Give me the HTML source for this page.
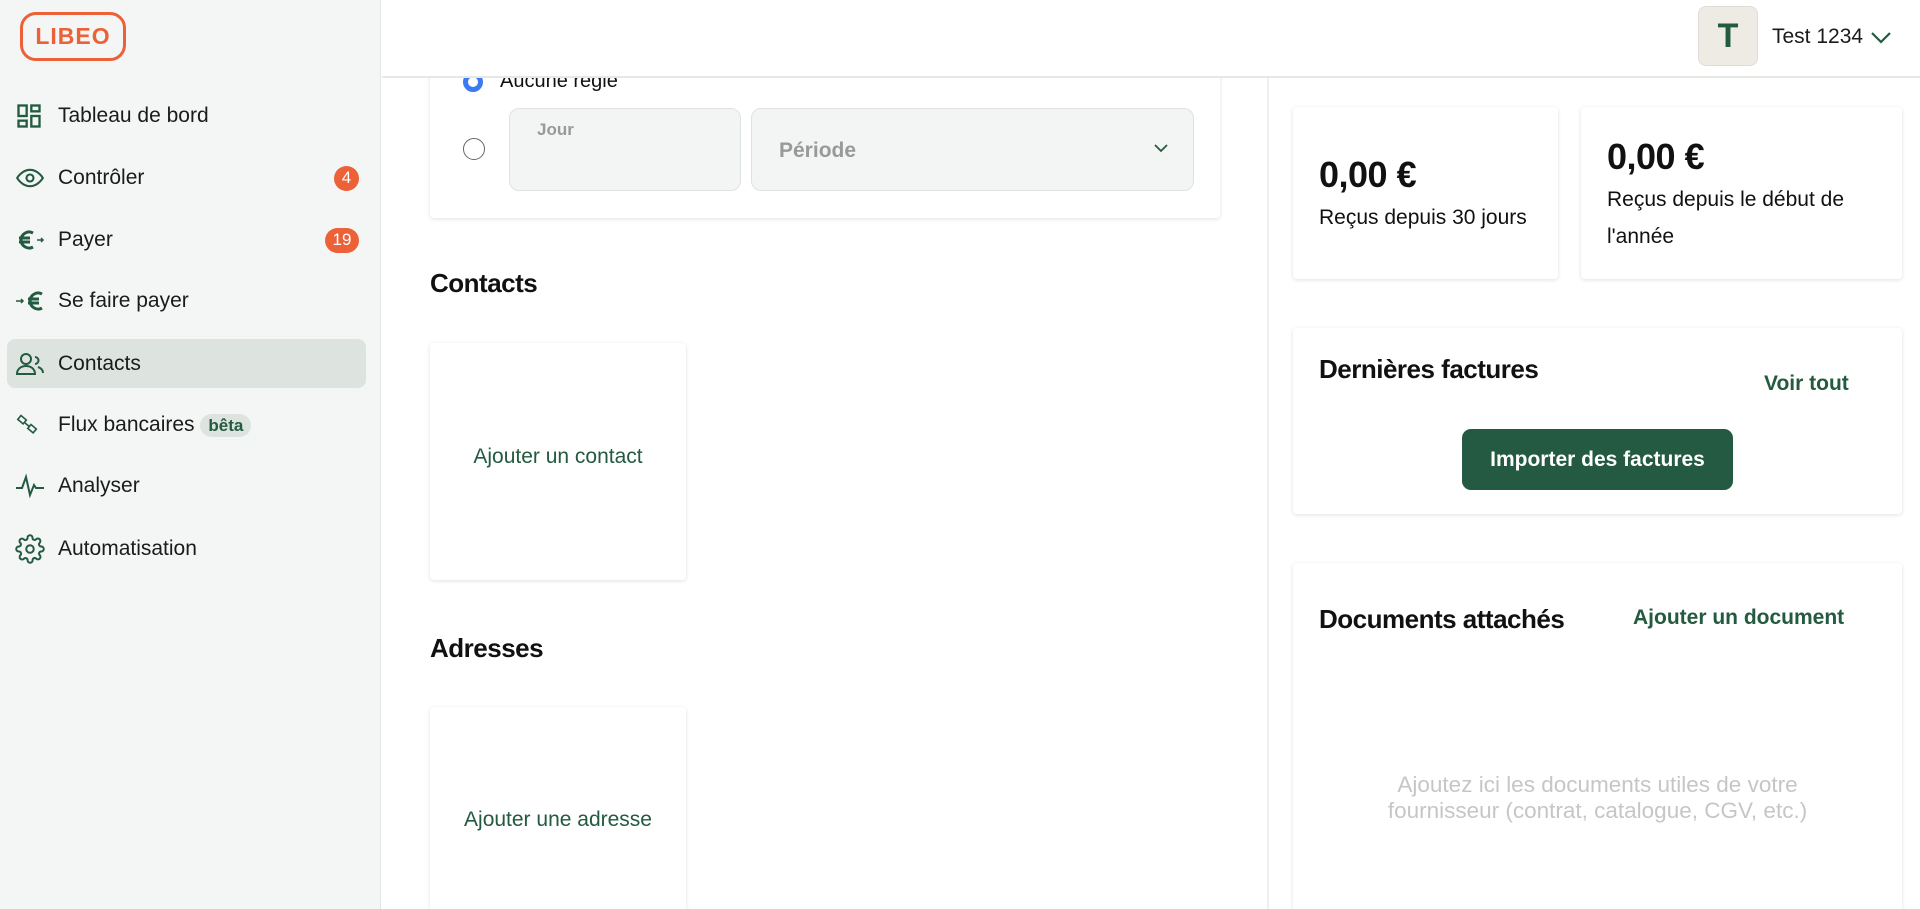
<!DOCTYPE html>
<html style="overflow:hidden;height:909px"><head><meta charset="utf-8"><style>
*{box-sizing:border-box;margin:0;padding:0}
html,body{overflow:hidden}
body{width:1920px;height:909px;overflow:hidden;background:#fff;font-family:"Liberation Sans",sans-serif;position:relative;color:#111}
.a{position:absolute}
#side{left:0;top:0;width:381px;height:909px;background:#f3f6f4;border-right:1px solid #e2e6e3}
.nav{position:absolute;left:7px;width:359px;height:50px;display:flex;align-items:center;font-size:21px;color:#1b1b1b}
.nav svg{position:absolute;left:8px}
.nav span.t{position:absolute;left:51px}
.badge{position:absolute;right:7px;background:#ec6137;color:#fff;font-size:17px;height:25px;border-radius:13px;display:flex;align-items:center;justify-content:center}
.card{position:absolute;background:#fff;border-radius:4px;box-shadow:0 1px 4px rgba(0,0,0,.12)}
.h{font-weight:bold;letter-spacing:-0.5px}
.g{color:#235a40}
</style></head><body>
<div id="side" class="a">
 <div class="a" style="left:20px;top:12px;width:106px;height:49px;border:3px solid #ec6137;border-radius:16px;color:#ec6137;font-weight:bold;font-size:23px;display:flex;align-items:center;justify-content:center;letter-spacing:1px">LIBEO</div>
 <div class="nav" style="top:91px"><svg width="28" height="28" viewBox="0 0 24 24" fill="none" stroke="#235a40" stroke-width="2"><rect x="3" y="3" width="7" height="9"/><rect x="14" y="3" width="7" height="5"/><rect x="14" y="12" width="7" height="9"/><rect x="3" y="16" width="7" height="5"/></svg><span class="t">Tableau de bord</span></div>
 <div class="nav" style="top:153px"><svg width="30" height="28" viewBox="0 0 24 24" fill="none" stroke="#235a40" stroke-width="1.8"><path d="M1 12s4-7 11-7 11 7 11 7-4 7-11 7S1 12 1 12z"/><circle cx="12" cy="12" r="3"/></svg><span class="t">Contrôler</span><div class="badge" style="width:25px">4</div></div>
 <div class="nav" style="top:215px"><svg width="30" height="28" viewBox="0 0 30 28" fill="none" stroke="#235a40" stroke-width="3"><path d="M18 7a8 8 0 1 0 0 14"/><path d="M4 12h11M4 16h11"/><path d="M22 14h6m-2-2l2 2-2 2" stroke-width="1.5"/></svg><span class="t">Payer</span><div class="badge" style="width:34px">19</div></div>
 <div class="nav" style="top:276px"><svg width="30" height="28" viewBox="0 0 30 28" fill="none" stroke="#235a40" stroke-width="3"><path d="M1 14h7m-2-2l2 2-2 2" stroke-width="1.5"/><path d="M27 7a8 8 0 1 0 0 14"/><path d="M13 12h11M13 16h11"/></svg><span class="t">Se faire payer</span></div>
 <div class="nav" style="top:339px;background:#dde4df;border-radius:8px;height:49px"><svg width="30" height="28" viewBox="0 0 30 28" fill="none" stroke="#235a40" stroke-width="2"><circle cx="11" cy="9" r="5"/><path d="M2 24c0-5 4-8 9-8s9 3 9 8z"/><path d="M20 7a3 3 0 0 1 0 7M23 17c3 1 5 3 5 6"/></svg><span class="t">Contacts</span></div>
 <div class="nav" style="top:400px"><svg width="28" height="28" viewBox="0 0 28 28" fill="none" stroke="#235a40" stroke-width="1.6"><rect x="4" y="6" width="7" height="5" transform="rotate(40 7 8)"/><rect x="14" y="15" width="7" height="5" transform="rotate(40 17 17)"/><path d="M10 12l5 4"/></svg><span class="t">Flux bancaires <span style="background:#dde4df;color:#235a40;font-weight:bold;font-size:17px;padding:2px 8px;border-radius:12px">bêta</span></span></div>
 <div class="nav" style="top:461px"><svg width="30" height="28" viewBox="0 0 30 28" fill="none" stroke="#235a40" stroke-width="2"><path d="M1 16h6l4-11 4 18 4-10 2 3h8"/></svg><span class="t">Analyser</span></div>
 <div class="nav" style="top:524px"><svg width="30" height="30" viewBox="0 0 24 24" fill="none" stroke="#235a40" stroke-width="1.6"><circle cx="12" cy="12" r="3"/><path d="M19.4 15a1.65 1.65 0 0 0 .33 1.82l.06.06a2 2 0 1 1-2.83 2.830l-.06-.06a1.65 1.65 0 0 0-1.82-.33 1.65 1.65 0 0 0-1 1.51V21a2 2 0 1 1-4 0v-.09A1.65 1.65 0 0 0 9 19.4a1.65 1.65 0 0 0-1.82.33l-.06.06a2 2 0 1 1-2.83-2.83l.06-.06A1.65 1.65 0 0 0 4.68 15a1.65 1.65 0 0 0-1.51-1H3a2 2 0 1 1 0-4h.09A1.65 1.65 0 0 0 4.6 9a1.65 1.65 0 0 0-.33-1.82l-.06-.06a2 2 0 1 1 2.83-2.830l.06.06A1.65 1.65 0 0 0 9 4.68a1.65 1.65 0 0 0 1-1.51V3a2 2 0 1 1 4 0v.09a1.65 1.65 0 0 0 1 1.51 1.65 1.65 0 0 0 1.82-.33l.06-.06a2 2 0 1 1 2.83 2.83l-.06.06A1.65 1.65 0 0 0 19.4 9a1.65 1.65 0 0 0 1.51 1H21a2 2 0 1 1 0 4h-.09a1.65 1.65 0 0 0-1.51 1z"/></svg><span class="t">Automatisation</span></div>
</div>

<!-- main left -->
<div class="card" style="left:430px;top:40px;width:790px;height:178px"></div>
<div class="a" style="left:463px;top:72px;width:20px;height:20px;border-radius:50%;border:5px solid #3b7bf2"></div>
<div class="a" style="left:500px;top:70px;font-size:20px">Aucune règle</div>
<div class="a" style="left:463px;top:138px;width:22px;height:22px;border-radius:50%;border:1.5px solid #666"></div>
<div class="a" style="left:509px;top:108px;width:232px;height:83px;background:#f2f5f3;border:1.5px solid #dfe3e0;border-radius:10px"><span style="position:absolute;left:27px;top:11px;color:#999;font-weight:bold;font-size:17px">Jour</span></div>
<div class="a" style="left:751px;top:108px;width:443px;height:83px;background:#f2f5f3;border:1.5px solid #dfe3e0;border-radius:10px"><span style="position:absolute;left:27px;top:30px;color:#999;font-weight:bold;font-size:21px">Période</span><svg class="a" style="right:24px;top:33px" width="16" height="12" viewBox="0 0 16 12"><path d="M2 3l6 6 6-6" fill="none" stroke="#235a40" stroke-width="1.8"/></svg></div>

<div class="a h" style="left:430px;top:268px;font-size:26px">Contacts</div>
<div class="card" style="left:430px;top:343px;width:256px;height:237px"><div class="g" style="position:absolute;width:100%;text-align:center;top:102px;font-size:21px">Ajouter un contact</div></div>
<div class="a h" style="left:430px;top:633px;font-size:26px">Adresses</div>
<div class="card" style="left:430px;top:707px;width:256px;height:210px"><div class="g" style="position:absolute;width:100%;text-align:center;top:101px;font-size:21px">Ajouter une adresse</div></div>

<div class="a" style="left:1267px;top:78px;width:2px;height:831px;background:#eef0ee"></div>

<!-- header -->
<div class="a" style="left:382px;top:0;width:1538px;height:78px;background:#fff;border-bottom:2px solid #e6e8e6"></div>
<div class="a" style="left:1698px;top:6px;width:60px;height:60px;background:#eeebe5;border:1px solid #e0ddd6;border-radius:8px;color:#235a40;font-weight:bold;font-size:34px;display:flex;align-items:center;justify-content:center">T</div>
<div class="a" style="left:1772px;top:25px;font-size:21px;color:#1b1b1b">Test 1234</div>
<svg class="a" style="left:1870px;top:30px" width="22" height="16" viewBox="0 0 22 16"><path d="M2 3l9 9 9-9" fill="none" stroke="#235a40" stroke-width="2.2"/></svg>

<!-- right -->
<div class="card" style="left:1293px;top:107px;width:265px;height:172px"></div>
<div class="a h" style="left:1319px;top:154px;font-size:36px">0,00 €</div>
<div class="a" style="left:1319px;top:206px;font-size:21px">Reçus depuis 30 jours</div>
<div class="card" style="left:1581px;top:107px;width:321px;height:172px"></div>
<div class="a h" style="left:1607px;top:136px;font-size:36px">0,00 €</div>
<div class="a" style="left:1607px;top:181px;font-size:21px;line-height:37px">Reçus depuis le début de<br>l'année</div>

<div class="card" style="left:1293px;top:328px;width:609px;height:186px"></div>
<div class="a h" style="left:1319px;top:354px;font-size:26px">Dernières factures</div>
<div class="a g" style="left:1764px;top:372px;font-size:21px;font-weight:bold">Voir tout</div>
<div class="a" style="left:1462px;top:429px;width:271px;height:61px;background:#245a41;border-radius:9px;color:#fff;font-weight:bold;font-size:21px;display:flex;align-items:center;justify-content:center">Importer des factures</div>

<div class="card" style="left:1293px;top:563px;width:609px;height:356px"></div>
<div class="a h" style="left:1319px;top:604px;font-size:26px">Documents attachés</div>
<div class="a g" style="left:1633px;top:606px;font-size:21px;font-weight:bold">Ajouter un document</div>
<div class="a" style="left:1293px;top:772px;width:609px;text-align:center;color:#c6c6c6;font-size:22.5px;line-height:26px">Ajoutez ici les documents utiles de votre<br>fournisseur (contrat, catalogue, CGV, etc.)</div>
</body></html>
